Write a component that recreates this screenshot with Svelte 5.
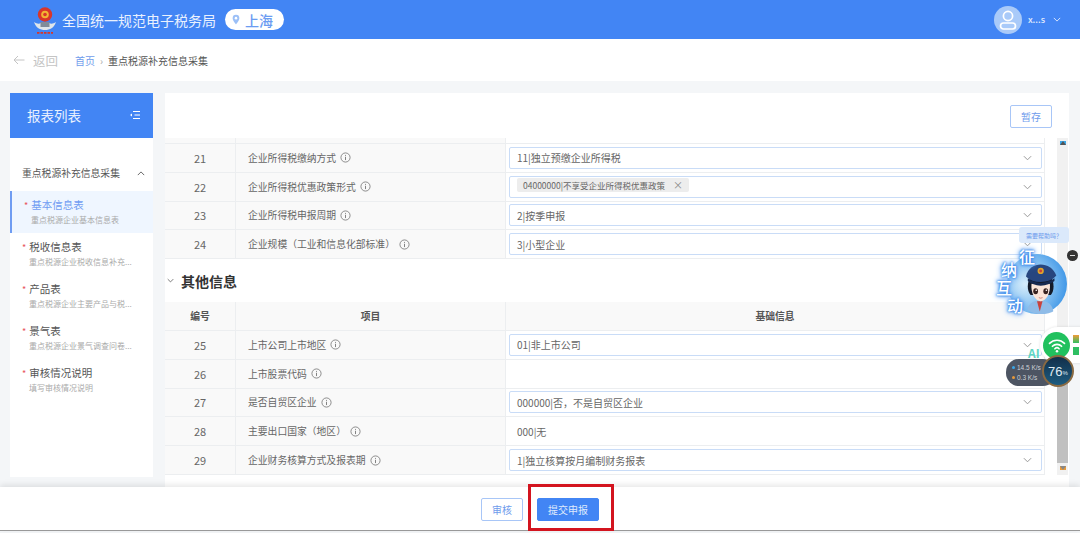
<script>
  const menu = [
    { title: "基本信息表", desc: "重点税源企业基本信息表", active: true },
    { title: "税收信息表", desc: "重点税源企业税收信息补充..." },
    { title: "产品表", desc: "重点税源企业主要产品与税..." },
    { title: "景气表", desc: "重点税源企业景气调查问卷..." },
    { title: "审核情况说明", desc: "填写审核情况说明" }
  ];

  const rowsTop = [
    { no: 21, name: "企业所得税缴纳方式", value: "11|独立预缴企业所得税", select: true },
    { no: 22, name: "企业所得税优惠政策形式", tag: "04000000|不享受企业所得税优惠政策", select: true },
    { no: 23, name: "企业所得税申报周期", value: "2|按季申报", select: true },
    { no: 24, name: "企业规模（工业和信息化部标准）", value: "3|小型企业", select: true }
  ];

  const rowsOther = [
    { no: 25, name: "上市公司上市地区", value: "01|非上市公司", select: true },
    { no: 26, name: "上市股票代码", value: "" },
    { no: 27, name: "是否自贸区企业", value: "000000|否，不是自贸区企业", select: true },
    { no: 28, name: "主要出口国家（地区）", value: "000|无" },
    { no: 29, name: "企业财务核算方式及报表期", value: "1|独立核算按月编制财务报表", select: true }
  ];
</script>

{#snippet row(r)}
  <div class="cell no">{r.no}</div>
  <div class="cell name">
    {r.name}
    <svg class="info" viewBox="0 0 12 12" aria-hidden="true">
      <circle cx="6" cy="6" r="5" fill="none" stroke="#777" stroke-width="0.9" />
      <path d="M6 5.2v3.6M6 3.2v1" stroke="#777" stroke-width="1" />
    </svg>
  </div>
  <div class="cell val">
    {#if r.select}
      <div class="select">
        {#if r.tag}
          <span class="tag">{r.tag}<span class="x">×</span></span>
        {:else}
          {r.value}
        {/if}
        <svg class="chev" viewBox="0 0 10 6" aria-hidden="true">
          <path d="M1 1l4 4 4-4" fill="none" stroke="#999" stroke-width="1.1" />
        </svg>
      </div>
    {:else}
      <span class="plain">{r.value}</span>
    {/if}
  </div>
{/snippet}

<div class="page">
  <header class="top">
    <svg class="emblem" viewBox="0 0 24 30" aria-hidden="true">
      <path d="M1 17c2 6 6 8 11 8s9-2 11-8c-3 2-5 2-7 1H8c-2 1-4 1-7-1z" fill="#dfe5ea" />
      <rect x="7.500" y="17" width="9" height="5" fill="#7f8c9a" />
      <circle cx="12" cy="9.500" r="7.200" fill="#d8362a" />
      <circle cx="12" cy="9.500" r="3.800" fill="#f2b632" />
      <circle cx="12" cy="9.500" r="1.800" fill="#d8362a" />
      <path d="M4 27.800h16" stroke="#d8362a" stroke-width="1.800" stroke-dasharray="2.500 1" />
    </svg>
    <span class="site">全国统一规范电子税务局</span>
    <span class="region">
      <svg viewBox="0 0 10 13" aria-hidden="true">
        <path d="M5 .6a4.200 4.200 0 0 0-4.200 4.200C.8 8 5 12.400 5 12.400S9.200 8 9.200 4.800A4.200 4.200 0 0 0 5 .6z" fill="#9cc0f7" />
        <circle cx="5" cy="4.800" r="1.600" fill="#fff" />
      </svg>
      上海
    </span>
    <div class="user">
      <span class="avatar">
        <svg viewBox="0 0 28 28" aria-hidden="true">
          <circle cx="14" cy="10" r="4.600" fill="none" stroke="#fff" stroke-width="1.700" />
          <rect x="6.500" y="17" width="15" height="6" rx="3" fill="none" stroke="#fff" stroke-width="1.700" />
        </svg>
      </span>
      <span class="uname">x...s</span>
      <svg class="uchev" viewBox="0 0 10 6" aria-hidden="true">
        <path d="M1 1l4 4 4-4" fill="none" stroke="#dbe7fd" stroke-width="1.200" />
      </svg>
    </div>
  </header>

  <nav class="crumbs">
    <span class="back">
      <svg viewBox="0 0 12 10" aria-hidden="true">
        <path d="M11.500 5H1M5 1L1 5l4 4" fill="none" stroke="#c4c4c4" stroke-width="1" />
      </svg>
      返回
    </span>
    <span class="home">首页</span>
    <span class="sep">›</span>
    <span class="current">重点税源补充信息采集</span>
  </nav>

  <div class="body">
    <aside class="side">
      <div class="side-head">
        <span>报表列表</span>
        <svg viewBox="0 0 10 10" aria-hidden="true">
          <path d="M3 1.500h7M4.500 5H10M3 8.500h7" stroke="#fff" stroke-width="1" />
          <path d="M0 5l2-1.600v3.200z" fill="#fff" />
        </svg>
      </div>
      <div class="side-group">
        <span>重点税源补充信息采集</span>
        <svg viewBox="0 0 10 6" aria-hidden="true">
          <path d="M1 5l4-4 4 4" fill="none" stroke="#555" stroke-width="1.100" />
        </svg>
      </div>
      {#each menu as m}
        <div class="item" class:active={m.active}>
          <div class="item-title"><i>*</i>{m.title}</div>
          <div class="item-desc">{m.desc}</div>
        </div>
      {/each}
    </aside>

    <main class="panel">
      <div class="toolbar"><button class="btn ghost small">暂存</button></div>
      <div class="scroll">
        <div class="content">
          <div class="grid first">
            <div class="cell stub"></div>
            <div class="cell stub"></div>
            <div class="cell stub white"></div>
            {#each rowsTop as r}
              {@render row(r)}
            {/each}
          </div>

          <h2 class="section">
            <svg viewBox="0 0 10 6" aria-hidden="true">
              <path d="M1 1l4 4 4-4" fill="none" stroke="#555" stroke-width="1.100" />
            </svg>
            其他信息
          </h2>

          <div class="grid">
            <div class="cell head">编号</div>
            <div class="cell head">项目</div>
            <div class="cell head">基础信息</div>
            {#each rowsOther as r}
              {@render row(r)}
            {/each}
          </div>
        </div>
        <div class="scrollbar">
          <div class="arrow up"></div>
          <div class="thumb"></div>
          <div class="arrow down"></div>
        </div>
      </div>
    </main>
  </div>

  <footer class="foot">
    <button class="btn ghost">审核</button>
    <button class="btn primary">提交申报</button>
    <div class="highlight"></div>
  </footer>

  <div class="bubble">需要帮助吗？</div>
  <div class="mascot">
    <svg viewBox="0 0 60 60" aria-hidden="true">
      <defs>
        <radialGradient id="halo" cx="0.3" cy="0.5" r="0.8">
          <stop offset="0" stop-color="#d6ecfb" />
          <stop offset="0.55" stop-color="#7fbdf0" />
          <stop offset="1" stop-color="#2b8ae4" />
        </radialGradient>
        <clipPath id="disc"><circle cx="30" cy="30" r="30" /></clipPath>
      </defs>
      <circle cx="30" cy="30" r="30" fill="url(#halo)" />
      <g clip-path="url(#disc)" transform="translate(7 5) scale(0.92)">
        <path d="M14 60c0-11 6-15 14-15s15 4 15 15z" fill="#8fbce8" />
        <path d="M25 46l3 11 3-11z" fill="#c9423c" />
        <path d="M15 30c0-10 6-15 14-15s14 5 14 15c0 4-1 7-3 9H18c-2-2-3-5-3-9z" fill="#141a28" />
        <path d="M19 27h20c1 10-4 19-10 19s-11-9-10-19z" fill="#fbe5d8" />
        <path d="M13 19c2-9 9-13 16-13s14 4 17 12c-4 5-10 7-17 7s-12-2-16-6z" fill="#27467f" />
        <path d="M15 21c4 3 9 5 14 5s11-2 15-5v3c-4 3-9 5-15 5s-10-2-14-5z" fill="#16294f" />
        <circle cx="29" cy="13" r="3.400" fill="#e0a52a" />
        <circle cx="29" cy="13" r="1.600" fill="#c9423c" />
        <ellipse cx="23.500" cy="35" rx="2.600" ry="3.200" fill="#3a2420" />
        <ellipse cx="34.500" cy="35" rx="2.600" ry="3.200" fill="#3a2420" />
        <circle cx="24.200" cy="34" r="0.900" fill="#fff" />
        <circle cx="35.200" cy="34" r="0.900" fill="#fff" />
        <path d="M27 42q2 1.200 4 0" fill="none" stroke="#c0645a" stroke-width="0.800" />
      </g>
    </svg>
  </div>
  <div class="glow g1">征</div>
  <div class="glow g2">纳</div>
  <div class="glow g3">互</div>
  <div class="glow g4">动</div>
  <div class="minus"></div>

  <div class="wifi">
    <span class="wifi-dot">
      <svg viewBox="0 0 24 24" aria-hidden="true">
        <path d="M3 10c5-5 13-5 18 0M6.500 13.500c3-3 8-3 11 0M9.500 16.500c1.500-1.500 3.500-1.500 5 0" fill="none" stroke="#fff" stroke-width="2" stroke-linecap="round" />
        <circle cx="12" cy="19.500" r="1.500" fill="#fff" />
      </svg>
    </span>
    <span class="wifi-bars"><b></b><b></b></span>
  </div>
  <div class="ai">AI</div>
  <div class="speed">
    <div class="rates">
      <div><i class="up"></i>14.5 K/s</div>
      <div><i class="down"></i>0.3 K/s</div>
    </div>
  </div>
  <div class="gauge">76<small>%</small></div>
</div>

<style>
  :global(body) {
    margin: 0;
    background: #fff;
  }

  .page {
    position: relative;
    width: 1080px;
    height: 533px;
    overflow: hidden;
    display: flex;
    flex-direction: column;
    background: #f4f6f8;
    font-family: "Noto Sans CJK SC", "Liberation Sans", sans-serif;
    color: #555;
    font-size: 10px;
  }

  .top {
    height: 39px;
    flex: none;
    display: flex;
    align-items: center;
    padding: 0 19px 0 33px;
    background: #4285f4;
    color: #fff;
    box-sizing: border-box;
  }

  .emblem {
    width: 24px;
    height: 30px;
    margin-right: 5px;
  }

  .site {
    font-size: 14px;
    color: #e9f1fe;
    margin-right: 9px;
    white-space: nowrap;
  }

  .region {
    display: inline-flex;
    align-items: center;
    gap: 5px;
    width: 59px;
    height: 21px;
    box-sizing: border-box;
    padding-left: 7px;
    border-radius: 11px;
    background: #fff;
    color: #6b9cf2;
    font-size: 14px;
    font-weight: 500;
  }

  .region svg {
    width: 8px;
    height: 11px;
  }

  .user {
    margin-left: auto;
    display: flex;
    align-items: center;
  }

  .avatar {
    width: 28px;
    height: 28px;
    border-radius: 50%;
    background: #a9caf9;
    display: block;
  }

  .avatar svg {
    display: block;
    width: 28px;
    height: 28px;
  }

  .uname {
    margin-left: 6px;
    font-size: 9px;
    font-weight: 500;
    color: #e4edfd;
  }

  .uchev {
    width: 8px;
    height: 5px;
    margin-left: 8px;
  }

  .crumbs {
    height: 42px;
    flex: none;
    display: flex;
    align-items: center;
    background: #fff;
    padding-left: 13px;
    box-sizing: border-box;
  }

  .back {
    display: inline-flex;
    align-items: center;
    gap: 8px;
    width: 62px;
    font-size: 12.500px;
    color: #c4c4c4;
  }

  .back svg {
    width: 12px;
    height: 10px;
  }

  .home {
    color: #6f9cec;
  }

  .sep {
    margin: 0 5px;
    color: #aaa;
  }

  .current {
    color: #555;
  }

  .body {
    flex: 1;
    min-height: 0;
    display: flex;
    padding: 12px 11px 0 10px;
    gap: 12px;
  }

  .side {
    width: 143px;
    height: 384px;
    flex: none;
    background: #fff;
  }

  .side-head {
    height: 45px;
    box-sizing: border-box;
    padding: 0 13px 2px 17px;
    display: flex;
    align-items: center;
    justify-content: space-between;
    background: #4285f4;
    color: #e9f1fe;
    font-size: 13.500px;
  }

  .side-head svg {
    width: 10px;
    height: 10px;
  }

  .side-group {
    height: 53px;
    box-sizing: border-box;
    padding: 17px 8px 0 12px;
    display: flex;
    justify-content: space-between;
    align-items: center;
    font-size: 9.800px;
    color: #555;
  }

  .side-group svg {
    width: 8px;
    height: 5px;
  }

  .item {
    height: 42px;
    box-sizing: border-box;
    padding: 7px 0 0 12px;
    white-space: nowrap;
  }

  .item.active {
    background: #eff6ff;
    border-left: 2px solid #6f9cf2;
    padding-left: 12px;
  }

  .item-title {
    font-size: 10.500px;
    line-height: 14px;
    color: #555;
  }

  .item-title i {
    color: #e8545a;
    font-style: normal;
    font-size: 9px;
    margin-right: 3px;
  }

  .active .item-title {
    color: #6f9cf2;
  }

  .item-desc {
    padding-left: 7px;
    margin-top: 1px;
    font-size: 8px;
    line-height: 12px;
    color: #aaa;
  }

  .panel {
    flex: 1;
    min-width: 0;
    height: 394px;
    display: flex;
    flex-direction: column;
    background: #fff;
  }

  .toolbar {
    height: 45px;
    flex: none;
    display: flex;
    justify-content: flex-end;
    align-items: flex-start;
    padding: 12px 17px 0 0;
    box-sizing: border-box;
  }

  .scroll {
    flex: 1;
    min-height: 0;
    display: flex;
    overflow: hidden;
  }

  .content {
    width: 880px;
    flex: none;
  }

  .grid {
    display: grid;
    grid-template-columns: 71px 270px 539px;
    grid-auto-rows: 28.800px;
  }

  .grid.first {
    grid-template-rows: 6px;
  }

  .cell {
    display: flex;
    align-items: center;
    box-sizing: border-box;
    border-bottom: 1px solid #eceef0;
    border-right: 1px solid #eceef0;
    background: #f9f9f9;
    color: #666;
    font-size: 9.800px;
  }

  .cell.stub.white,
  .cell.val {
    background: #fff;
  }

  .no {
    justify-content: center;
    font-size: 11px;
  }

  .name {
    padding-left: 12px;
    gap: 4px;
  }

  .info {
    width: 11px;
    height: 11px;
    flex: none;
  }

  .head {
    justify-content: center;
    font-weight: 700;
    color: #555;
  }

  .val {
    padding: 0 2px 0 3px;
  }

  .plain {
    padding-left: 8px;
    font-size: 10px;
  }

  .select {
    position: relative;
    width: 100%;
    height: 22px;
    box-sizing: border-box;
    display: flex;
    align-items: center;
    padding-left: 7px;
    border: 1px solid #c9dcf7;
    border-radius: 2px;
    background: #fff;
    color: #666;
    font-size: 10px;
  }

  .tag {
    align-self: flex-start;
    margin-top: 1px;
    height: 14px;
    display: inline-flex;
    align-items: center;
    padding: 0 6px;
    border-radius: 2px;
    background: #ededed;
    font-size: 8.500px;
    color: #666;
  }

  .x {
    margin-left: 8px;
    font-size: 10px;
    color: #888;
  }

  .chev {
    position: absolute;
    right: 9px;
    top: 7px;
    width: 9px;
    height: 6px;
  }

  .section {
    height: 43px;
    margin: 0;
    display: flex;
    align-items: center;
    gap: 7px;
    padding-left: 2px;
    font-size: 14px;
    font-weight: 700;
    color: #333;
  }

  .section svg {
    width: 7px;
    height: 5px;
  }

  .scrollbar {
    margin-left: 12px;
    width: 11px;
    height: 337px;
    background: #f1f1f1;
    display: flex;
    flex-direction: column;
    align-items: center;
  }

  .thumb {
    width: 100%;
    height: 96px;
    margin-top: auto;
    background: #c0c0c0;
  }

  .arrow {
    width: 0;
    height: 0;
    border: 3px solid transparent;
  }

  .arrow.up {
    margin-top: 3px;
    border-top: 0;
    border-bottom: 4px solid #555;
  }

  .arrow.down {
    margin: 3px 0 5px;
    border-bottom: 0;
    border-top: 4px solid #888;
  }

  .foot {
    position: relative;
    height: 44px;
    flex: none;
    margin-bottom: 2px;
    display: flex;
    justify-content: center;
    align-items: center;
    gap: 14px;
    padding-top: 2px;
    background: #fff;
    box-shadow: 0 -2px 6px rgba(0, 0, 0, 0.1);
    border-bottom: 1px solid #999;
    box-sizing: border-box;
  }

  .btn {
    height: 23px;
    padding: 0;
    border-radius: 2px;
    font-family: inherit;
    font-size: 10px;
  }

  .ghost {
    width: 42px;
    border: 1px solid #a8c6f7;
    background: #fff;
    color: #6f9cec;
  }

  .primary {
    width: 62px;
    border: 1px solid #4285f4;
    background: #4285f4;
    color: #dfeafd;
  }

  .highlight {
    position: absolute;
    left: 528px;
    top: -3px;
    width: 86px;
    height: 47px;
    box-sizing: border-box;
    border: 3px solid #d3141f;
  }

  .bubble {
    position: absolute;
    left: 1019px;
    top: 227px;
    width: 50px;
    height: 16px;
    display: flex;
    align-items: center;
    justify-content: center;
    border-radius: 3px;
    background: #dbe9fb;
    color: #6f9cec;
    font-size: 6px;
    white-space: nowrap;
  }

  .mascot {
    position: absolute;
    left: 1007px;
    top: 254px;
    width: 60px;
    height: 60px;
  }

  .mascot svg {
    display: block;
  }

  .glow {
    position: absolute;
    color: #fff;
    font-size: 16px;
    line-height: 16px;
    font-weight: 500;
    text-shadow: 0 0 2px #2f7fe8, 0 0 3px #2f7fe8, 0 0 5px #4a98f0, 0 0 7px #6fb0f5;
  }

  .g1 { left: 1019px; top: 248px; }
  .g2 { left: 1001px; top: 261px; }
  .g3 { left: 996px; top: 279px; }
  .g4 { left: 1007px; top: 297px; }

  .minus {
    position: absolute;
    left: 1067px;
    top: 250px;
    width: 11px;
    height: 11px;
    border-radius: 50%;
    background: linear-gradient(#ddd, #ddd) center / 5px 1px no-repeat, #333;
  }

  .wifi {
    position: absolute;
    left: 1040px;
    top: 327px;
    width: 60px;
    height: 36px;
    display: flex;
    align-items: center;
    gap: 3px;
    padding-left: 3px;
    box-sizing: border-box;
    border-radius: 18px;
    background: #fff;
    box-shadow: 0 0 3px rgba(0, 0, 0, 0.12);
  }

  .wifi-dot {
    width: 27px;
    height: 27px;
    border-radius: 50%;
    background: #21c15e;
    display: flex;
    align-items: center;
    justify-content: center;
  }

  .wifi-dot svg {
    width: 20px;
    height: 20px;
  }

  .wifi-bars {
    display: flex;
    flex-direction: column;
    gap: 4px;
  }

  .wifi-bars b {
    display: block;
    width: 6px;
    height: 8px;
    background: #2fbf62;
  }

  .wifi-bars b:first-child {
    background: linear-gradient(#f29b38, #2fbf62);
  }

  .ai {
    position: absolute;
    left: 1028px;
    top: 346px;
    font-size: 12px;
    line-height: 14px;
    font-weight: 700;
    color: #5fd6c2;
  }

  .speed {
    position: absolute;
    left: 1006px;
    top: 359px;
    width: 50px;
    height: 27px;
    border-radius: 13px;
    background: #4d5563;
    color: #ccd0d6;
    font-size: 6.500px;
    font-family: "Liberation Sans", sans-serif;
    display: flex;
    align-items: center;
  }

  .rates {
    padding-left: 6px;
    line-height: 10px;
    white-space: nowrap;
  }

  .rates i {
    display: inline-block;
    width: 3px;
    height: 3px;
    border-radius: 50%;
    margin-right: 2px;
    vertical-align: 1px;
  }

  .up { background: #3aa6e8; }
  .down { background: #e89a3a; }

  .gauge {
    position: absolute;
    left: 1042px;
    top: 355px;
    width: 32px;
    height: 32px;
    box-sizing: border-box;
    border: 2px solid #8a6a42;
    border-radius: 50%;
    background: linear-gradient(#122f4a, #1d5c80);
    color: #dfeaf2;
    font-family: "Liberation Sans", sans-serif;
    font-size: 13px;
    display: flex;
    align-items: center;
    justify-content: center;
  }

  .gauge small {
    font-size: 6px;
    margin-top: 3px;
  }
</style>
